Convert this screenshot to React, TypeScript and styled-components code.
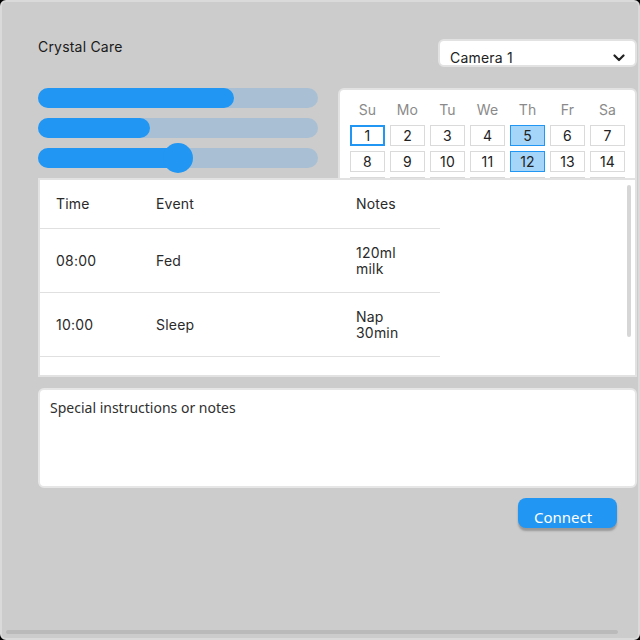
import React from "react";
import styled, { createGlobalStyle } from "styled-components";

const Global = createGlobalStyle`
  html, body { margin: 0; padding: 0; background: #000; }
  * { box-sizing: border-box; }
`;

const Screen = styled.div`
  position: relative;
  width: 640px;
  height: 640px;
  background: #cccccc;
  border: 2px solid #dadada;
  border-radius: 6px;
  overflow: hidden;
  font-family: Inter, "Noto Sans", sans-serif;
  letter-spacing: 0.2px;
  color: #222;
`;

const Content = styled.div`
  display: flex;
  flex-direction: column;
  padding: 37px 1px 0 36px;
`;

const Header = styled.div`
  display: flex;
  justify-content: space-between;
  align-items: flex-start;
  height: 28px;
`;

const Title = styled.div`
  font-size: 14px;
  line-height: 16px;
  color: #1a1a1a;
`;

const Dropdown = styled.div`
  width: 199px;
  height: 28px;
  display: flex;
  align-items: flex-start;
  justify-content: space-between;
  padding: 9px 10px 0 10px;
  background: #fff;
  border: 2px solid #e2e2e2;
  border-radius: 6px;
  font-size: 14px;
  line-height: 16px;
`;

const Chevron = styled.svg`
  margin-top: 4px;
`;

const TopRow = styled.div`
  display: flex;
  gap: 20px;
  margin-top: 21px;
  height: 90px;
  align-items: flex-start;
`;

const Sliders = styled.div`
  width: 280px;
  display: flex;
  flex-direction: column;
  gap: 10px;
`;

const Track = styled.div`
  position: relative;
  height: 20px;
  border-radius: 10px;
  background: #a9c0d4;
`;

const Fill = styled.div`
  height: 100%;
  border-radius: 10px;
  background: #2196f3;
`;

const Knob = styled.div`
  position: absolute;
  top: -5px;
  width: 30px;
  height: 30px;
  margin-left: -15px;
  border-radius: 50%;
  background: #2196f3;
`;

const CalendarClip = styled.div`
  width: 299px;
  height: 90px;
  overflow: hidden;
`;

const Calendar = styled.div`
  display: grid;
  grid-template-columns: repeat(7, 35px);
  grid-auto-rows: 21px;
  grid-template-rows: 20px;
  column-gap: 5px;
  row-gap: 5px;
  padding: 10px 10px;
  background: #fff;
  border: 2px solid #e2e2e2;
  border-radius: 6px;
  font-size: 14px;
  line-height: 16px;
`;

const DayName = styled.div`
  display: flex;
  align-items: center;
  justify-content: center;
  color: #8a8a8a;
`;

const DayCell = styled.div<{ $today?: boolean; $mark?: boolean }>`
  display: flex;
  align-items: center;
  justify-content: center;
  background: ${(p) => (p.$mark ? "#a6d5fa" : "#fff")};
  border: ${(p) =>
    p.$today ? "2px solid #2196f3" : p.$mark ? "1px solid #2196f3" : "1px solid #dadada"};
  color: #222;
`;

const TableBox = styled.div`
  position: relative;
  height: 199px;
  background: #fff;
  border: 2px solid #e2e2e2;
  overflow: hidden;
`;

const Table = styled.table`
  width: 400px;
  border-collapse: collapse;
  table-layout: fixed;
  font-size: 14px;
  line-height: 16px;
`;

const Cell = styled.td<{ $head?: boolean }>`
  padding: 16px 16px ${(p) => (p.$head ? "16px" : "15px")};
  border-bottom: 1px solid #e0e0e0;
  text-align: left;
  font-weight: normal;
  vertical-align: middle;
  color: #2a2a2a;
`;

const VScroll = styled.div`
  position: absolute;
  right: 4px;
  top: 5px;
  width: 4px;
  height: 152px;
  border-radius: 2px;
  background: #d6d6d6;
`;

const NotesBox = styled.div`
  margin-top: 11px;
  height: 100px;
  padding: 8px 10px;
  background: #fff;
  border: 2px solid #e6e6e6;
  border-radius: 6px;
  font-family: "Noto Sans", sans-serif;
  letter-spacing: 0;
  font-size: 14px;
  line-height: 19px;
  color: #303030;
`;

const ButtonRow = styled.div`
  display: flex;
  justify-content: flex-end;
  padding-right: 20px;
  margin-top: 10px;
`;

const Button = styled.button`
  width: 99px;
  height: 30px;
  padding: 7px 0 0 16px;
  text-align: left;
  border: none;
  border-radius: 8px;
  background: #2196f3;
  box-shadow: 0 3px 2px rgba(0, 0, 0, 0.25);
  color: #fff;
  font-family: "Noto Sans", sans-serif;
  font-size: 15px;
  line-height: 20px;
`;

const HScroll = styled.div`
  position: absolute;
  left: 4px;
  bottom: 4px;
  width: 612px;
  height: 4px;
  border-radius: 2px;
  background: #bababa;
`;

const sliders = [70, 40, 50];
const days = ["Su", "Mo", "Tu", "We", "Th", "Fr", "Sa"];
const rows = [
  ["08:00", "Fed", "120ml milk"],
  ["10:00", "Sleep", "Nap 30min"],
  ["12:00", "Check", "Allergy check"],
];

export default function App() {
  return (
    <>
      <Global />
      <Screen>
        <Content>
          <Header>
            <Title>Crystal Care</Title>
            <Dropdown>
              <span>Camera 1</span>
              <Chevron width="12" height="8" viewBox="0 0 12 8">
                <polyline
                  points="1.5,1.5 6,6 10.5,1.5"
                  fill="none"
                  stroke="#222"
                  strokeWidth="2.2"
                  strokeLinecap="round"
                  strokeLinejoin="round"
                />
              </Chevron>
            </Dropdown>
          </Header>
          <TopRow>
            <Sliders>
              {sliders.map((v, i) => (
                <Track key={i}>
                  <Fill style={{ width: `${v}%` }} />
                  {i === 2 && <Knob style={{ left: `${v}%` }} />}
                </Track>
              ))}
            </Sliders>
            <CalendarClip>
              <Calendar>
                {days.map((d) => (
                  <DayName key={d}>{d}</DayName>
                ))}
                {Array.from({ length: 28 }, (_, i) => i + 1).map((n) => (
                  <DayCell key={n} $today={n === 1} $mark={n === 5 || n === 12}>
                    {n}
                  </DayCell>
                ))}
              </Calendar>
            </CalendarClip>
          </TopRow>
          <TableBox>
            <Table>
              <colgroup>
                <col style={{ width: 100 }} />
                <col style={{ width: 200 }} />
                <col style={{ width: 100 }} />
              </colgroup>
              <thead>
                <tr>
                  <Cell as="th" $head>Time</Cell>
                  <Cell as="th" $head>Event</Cell>
                  <Cell as="th" $head>Notes</Cell>
                </tr>
              </thead>
              <tbody>
                {rows.map((r) => (
                  <tr key={r[0]}>
                    {r.map((c, j) => (
                      <Cell key={j}>{c}</Cell>
                    ))}
                  </tr>
                ))}
              </tbody>
            </Table>
            <VScroll />
          </TableBox>
          <NotesBox>Special instructions or notes</NotesBox>
          <ButtonRow>
            <Button>Connect</Button>
          </ButtonRow>
        </Content>
        <HScroll />
      </Screen>
    </>
  );
}
